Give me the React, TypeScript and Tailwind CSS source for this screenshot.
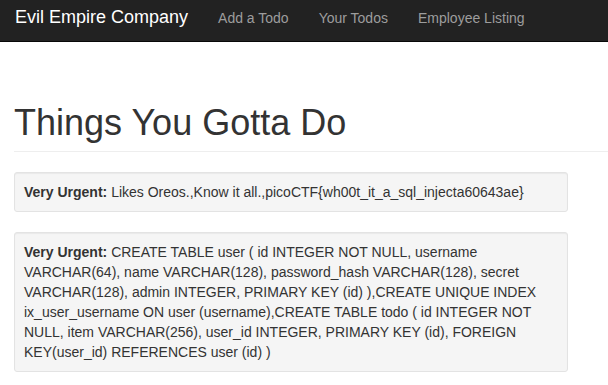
const todos = [
  'Likes Oreos.,Know it all.,picoCTF{wh00t_it_a_sql_injecta60643ae}',
  'CREATE TABLE user ( id INTEGER NOT NULL, username VARCHAR(64), name VARCHAR(128), password_hash VARCHAR(128), secret VARCHAR(128), admin INTEGER, PRIMARY KEY (id) ),CREATE UNIQUE INDEX ix_user_username ON user (username),CREATE TABLE todo ( id INTEGER NOT NULL, item VARCHAR(256), user_id INTEGER, PRIMARY KEY (id), FOREIGN KEY(user_id) REFERENCES user (id) )',
]

const links = ['Add a Todo', 'Your Todos', 'Employee Listing']

export default function App() {
  return (
    <div className="min-h-screen bg-white text-[#333] font-['Liberation_Sans',Arial,sans-serif] text-[14px] leading-[20px]">
      {/* Navbar */}
      <nav className="h-[42px] bg-[#222] border-b border-[#080808] flex items-start">
        <a className="px-[15px] pt-[7px] text-[18px] leading-[20px] text-white">Evil Empire Company</a>
        <ul className="flex">
          {links.map((link) => (
            <li key={link}>
              <a className="block px-[15px] pt-[8px] text-[#9d9d9d]">{link}</a>
            </li>
          ))}
        </ul>
      </nav>

      <div className="pl-[14px]">
        {/* Page header */}
        <div className="mt-[61px] pb-[8px] border-b border-[#eee] mb-[20px]">
          <h1 className="text-[36px] leading-[40px] font-medium">Things You Gotta Do</h1>
        </div>

        {/* Todo list */}
        <div className="w-[554px] flex flex-col gap-[20px]">
          {todos.map((todo, index) => (
            <div
              key={index}
              className="bg-[#f5f5f5] border border-[#e3e3e3] rounded-[3px] p-[9px] shadow-[inset_0_1px_1px_rgba(0,0,0,0.05)]"
            >
              <strong className="font-bold">Very Urgent:</strong> {todo}
            </div>
          ))}
        </div>
      </div>
    </div>
  )
}
